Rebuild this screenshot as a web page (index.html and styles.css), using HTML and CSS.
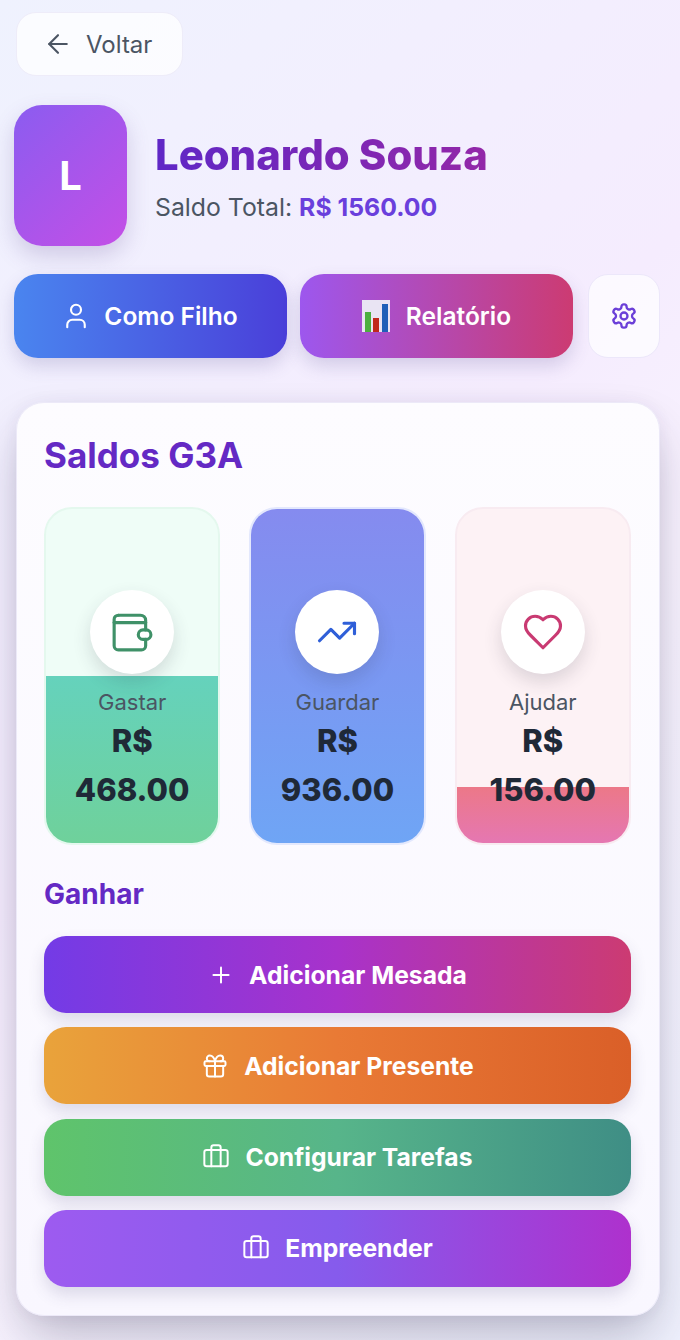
FILE: index.html
```html
<!DOCTYPE html>
<html>
<head>
    <link rel="stylesheet" href="styles.css">
</head>
<body>
    <div class="page">
        <button class="back-btn">
            <svg class="icon-30" viewBox="0 0 24 24"><path d="M19 12H5"/><path d="M12 19l-7-7 7-7"/></svg>
            Voltar
        </button>

        <div class="profile">
            <div class="avatar">L</div>
            <div class="profile-info">
                <h1 class="name">Leonardo Souza</h1>
                <p class="total">Saldo Total: <strong>R$ 1560.00</strong></p>
            </div>
        </div>

        <div class="top-actions">
            <button class="action-btn action-child">
                <svg class="icon-30" viewBox="0 0 24 24"><path d="M19 21v-2a4 4 0 0 0-4-4H9a4 4 0 0 0-4 4v2"/><circle cx="12" cy="7" r="4"/></svg>
                Como Filho
            </button>
            <button class="action-btn action-report">
                <svg class="chart" viewBox="0 0 28 32"><rect width="28" height="32" fill="#e9e4f3"/><rect x="3" y="12" width="6" height="20" fill="#4caf3f"/><rect x="11" y="18" width="6" height="14" fill="#c0281c"/><rect x="20" y="4" width="6" height="28" fill="#1f5fb8"/></svg>
                Relatório
            </button>
            <button class="gear-btn">
                <svg class="icon-28 gear" viewBox="0 0 24 24"><path d="M12.22 2h-.44a2 2 0 0 0-2 2v.18a2 2 0 0 1-1 1.73l-.43.25a2 2 0 0 1-2 0l-.15-.08a2 2 0 0 0-2.73.73l-.22.38a2 2 0 0 0 .73 2.73l.15.1a2 2 0 0 1 1 1.72v.51a2 2 0 0 1-1 1.74l-.15.09a2 2 0 0 0-.73 2.73l.22.38a2 2 0 0 0 2.73.73l.15-.08a2 2 0 0 1 2 0l.43.25a2 2 0 0 1 1 1.73V20a2 2 0 0 0 2 2h.44a2 2 0 0 0 2-2v-.18a2 2 0 0 1 1-1.73l.43-.25a2 2 0 0 1 2 0l.15.08a2 2 0 0 0 2.73-.73l.22-.39a2 2 0 0 0-.73-2.73l-.15-.08a2 2 0 0 1-1-1.74v-.5a2 2 0 0 1 1-1.74l.15-.09a2 2 0 0 0 .73-2.73l-.22-.38a2 2 0 0 0-2.73-.73l-.15.08a2 2 0 0 1-2 0l-.43-.25a2 2 0 0 1-1-1.73V4a2 2 0 0 0-2-2z"/><circle cx="12" cy="12" r="3"/></svg>
            </button>
        </div>

        <div class="card">
            <h2 class="card-title">Saldos G3A</h2>

            <div class="tiles">
                <div class="tile tile-green">
                    <div class="fill" style="height: 50%"></div>
                    <div class="tile-body">
                        <div class="circle">
                            <svg class="icon-42 wallet" viewBox="0 0 40 40"><path d="M7 4h21a5 5 0 0 1 5 5v9"/><path d="M33 27v6a4 4 0 0 1-4 4H7a4 4 0 0 1-4-4V8a4 4 0 0 1 4-4"/><path d="M3 11h30"/><rect x="26" y="18" width="12" height="9" rx="4.5"/></svg>
                        </div>
                        <div class="tile-label">Gastar</div>
                        <div class="tile-value">R$ 468.00</div>
                    </div>
                </div>
                <div class="tile tile-blue">
                    <div class="fill" style="height: 100%"></div>
                    <div class="tile-body">
                        <div class="circle">
                            <svg class="icon-42" viewBox="0 0 24 24"><path d="M22 7l-8.5 8.5-5-5L2 17"/><path d="M16 7h6v6"/></svg>
                        </div>
                        <div class="tile-label">Guardar</div>
                        <div class="tile-value">R$ 936.00</div>
                    </div>
                </div>
                <div class="tile tile-pink">
                    <div class="fill" style="height: 16.67%"></div>
                    <div class="tile-body">
                        <div class="circle">
                            <svg class="icon-42" viewBox="0 0 24 24"><path d="M19 14c1.49-1.46 3-3.21 3-5.5A5.5 5.5 0 0 0 16.5 3c-1.76 0-3 .5-4.5 2-1.5-1.5-2.74-2-4.5-2A5.5 5.5 0 0 0 2 8.5c0 2.3 1.5 4.05 3 5.5l7 7z"/></svg>
                        </div>
                        <div class="tile-label">Ajudar</div>
                        <div class="tile-value">R$ 156.00</div>
                    </div>
                </div>
            </div>

            <h3 class="section-title">Ganhar</h3>

            <div class="earn-list">
                <button class="earn-btn earn-mesada">
                    <svg class="icon-26" viewBox="0 0 24 24"><path d="M5 12h14"/><path d="M12 5v14"/></svg>
                    Adicionar Mesada
                </button>
                <button class="earn-btn earn-presente">
                    <svg class="icon-28" viewBox="0 0 24 24"><rect x="3" y="8" width="18" height="4" rx="1"/><path d="M12 8v13"/><path d="M19 12v7a2 2 0 0 1-2 2H7a2 2 0 0 1-2-2v-7"/><path d="M7.5 8a2.5 2.5 0 0 1 0-5A4.8 8 0 0 1 12 8a4.8 8 0 0 1 4.5-5 2.5 2.5 0 0 1 0 5"/></svg>
                    Adicionar Presente
                </button>
                <button class="earn-btn earn-tarefas">
                    <svg class="icon-28" viewBox="0 0 24 24"><path d="M16 20V4a2 2 0 0 0-2-2h-4a2 2 0 0 0-2 2v16"/><rect x="2" y="6" width="20" height="14" rx="2"/></svg>
                    Configurar Tarefas
                </button>
                <button class="earn-btn earn-empreender">
                    <svg class="icon-28" viewBox="0 0 24 24"><path d="M16 20V4a2 2 0 0 0-2-2h-4a2 2 0 0 0-2 2v16"/><rect x="2" y="6" width="20" height="14" rx="2"/></svg>
                    Empreender
                </button>
            </div>
        </div>
    </div>
</body>
</html>
```

FILE: styles.css
```css
* {
    box-sizing: border-box;
}

html, body {
    margin: 0;
    height: 100%;
}

body {
    font-family: Inter, "Liberation Sans", sans-serif;
    background: linear-gradient(135deg, #eff2fe 0%, #f5ecfe 45%, #f8f2fe 60%, #eff1fd 100%);
    overflow: hidden;
}

button {
    font-family: inherit;
    border: none;
    cursor: pointer;
}

svg {
    fill: none;
    stroke: currentColor;
    stroke-width: 2;
    stroke-linecap: round;
    stroke-linejoin: round;
    flex-shrink: 0;
}

.icon-26 { width: 26px; height: 26px; stroke-width: 1.8; }
.icon-28 { width: 28px; height: 28px; stroke-width: 1.7; }
.icon-30 { width: 30px; height: 30px; stroke-width: 1.7; }
.icon-42 { width: 42px; height: 42px; stroke-width: 1.8; }

.gear { stroke-width: 2; }
.wallet { stroke-width: 3; }

.page {
    padding: 12px 20px 0 14px;
}

.back-btn {
    display: flex;
    align-items: center;
    gap: 13px;
    width: 167px;
    height: 64px;
    margin-left: 2px;
    padding: 0 0 0 26px;
    background: rgba(255, 255, 255, 0.75);
    border: 1px solid #eeecf9;
    border-radius: 20px;
    color: #4b5563;
    font-size: 24px;
}

.profile {
    display: flex;
    align-items: center;
    gap: 28px;
    margin-top: 29px;
}

.avatar {
    display: flex;
    align-items: center;
    justify-content: center;
    width: 113px;
    height: 141px;
    background: linear-gradient(135deg, #8b5cf0, #c44fe6);
    border-radius: 28px;
    box-shadow: 0 10px 22px rgba(90, 70, 140, 0.22);
    color: #fff;
    font-size: 40px;
    font-weight: 700;
}

.name {
    margin: 0;
    font-size: 41.8px;
    font-weight: 800;
    line-height: 54px;
    color: transparent;
    background: linear-gradient(90deg, #5f27c6, #9327a8);
    -webkit-background-clip: text;
    background-clip: text;
}

.total {
    margin: 8px 0 0;
    font-size: 24.8px;
    line-height: 34px;
    color: #4b5563;
}

.total strong {
    font-weight: 700;
    color: #6a3fdc;
}

.top-actions {
    display: flex;
    align-items: center;
    gap: 13px;
    margin-top: 28px;
}

.action-btn {
    display: flex;
    align-items: center;
    justify-content: center;
    gap: 13px;
    width: 273px;
    height: 84px;
    padding: 0;
    border-radius: 24px;
    box-shadow: 0 8px 18px rgba(80, 70, 140, 0.2);
    color: #fff;
    font-size: 24.5px;
    font-weight: 600;
}

.action-child {
    padding-right: 2px;
    background: linear-gradient(90deg, #4a85ef, #4a3fd9);
}

.action-report {
    gap: 16px;
    background: linear-gradient(90deg, #9d57ee, #cc3b72);
}

.chart {
    width: 28px;
    height: 32px;
    stroke: none;
}

.gear-btn {
    display: flex;
    align-items: center;
    justify-content: center;
    width: 72px;
    height: 84px;
    margin-left: 2px;
    background: rgba(255, 255, 255, 0.7);
    border: 1px solid #ece7fa;
    border-radius: 20px;
    color: #6b3fd8;
}

.card {
    margin: 44px 0 0 2px;
    padding: 28px 28px 29px 27px;
    height: 914px;
    background: linear-gradient(180deg, #fdfcff 0%, #f9f7ff 100%);
    border: 1px solid #ece9f8;
    border-radius: 28px;
    box-shadow: 0 25px 50px -8px rgba(40, 35, 70, 0.3), 0 0 16px rgba(60, 55, 100, 0.06);
}

.card-title {
    margin: 0;
    font-size: 35px;
    font-weight: 700;
    line-height: 48px;
    color: #6429c4;
}

.tiles {
    display: grid;
    grid-template-columns: repeat(3, 1fr);
    column-gap: 29px;
    margin-top: 28px;
}

.tile {
    position: relative;
    height: 338px;
    border: 2px solid;
    border-radius: 28px;
    overflow: hidden;
}

.fill {
    position: absolute;
    left: 0;
    right: 0;
    bottom: 0;
}

.tile-green { background: #effdf7; border-color: #e4f8ee; }
.tile-green .fill { background: linear-gradient(180deg, #65d2bc, #6fd19b); }
.tile-green .circle { color: #3f9168; }

.tile-blue { background: #eef2ff; border-color: #e3e8fd; }
.tile-blue .fill { background: linear-gradient(180deg, #858bef, #6fa5f5); }
.tile-blue .circle { color: #2f5fd8; }

.tile-pink { background: #fdf2f5; border-color: #f8ebf1; }
.tile-pink .fill { background: linear-gradient(180deg, #ec7888, #e577b2); }
.tile-pink .circle { color: #c93a72; }

.tile-body {
    position: relative;
    display: flex;
    flex-direction: column;
    align-items: center;
    padding-top: 81px;
}

.circle {
    display: flex;
    align-items: center;
    justify-content: center;
    width: 84px;
    height: 84px;
    background: #fff;
    border-radius: 50%;
    box-shadow: 0 8px 18px rgba(50, 50, 70, 0.16);
}

.tile-label {
    margin-top: 14px;
    font-size: 22px;
    line-height: 28px;
    color: #4b5563;
}

.tile-value {
    width: 130px;
    text-align: center;
    font-size: 31px;
    font-weight: 800;
    line-height: 49px;
    color: #1f2937;
}

.section-title {
    margin: 29px 0 0;
    font-size: 28px;
    font-weight: 700;
    line-height: 40px;
    color: #6429c4;
}

.earn-list {
    display: flex;
    flex-direction: column;
    gap: 14.3px;
    margin-top: 22px;
}

.earn-btn {
    display: flex;
    align-items: center;
    justify-content: center;
    gap: 15px;
    width: 100%;
    height: 77px;
    border-radius: 22px;
    box-shadow: 0 8px 16px rgba(70, 60, 110, 0.16);
    color: #fff;
    font-size: 24.7px;
    font-weight: 700;
}

.earn-mesada { background: linear-gradient(90deg, #733be6, #a832cb 50%, #cc3b72); }
.earn-presente { background: linear-gradient(90deg, #e9a33b, #e97a35 50%, #da5f28); }
.earn-tarefas { background: linear-gradient(90deg, #5fc46b, #57b58a 50%, #3f8e85); }
.earn-empreender { background: linear-gradient(90deg, #9d5bf0, #865bec 50%, #ae31cd); }
```
